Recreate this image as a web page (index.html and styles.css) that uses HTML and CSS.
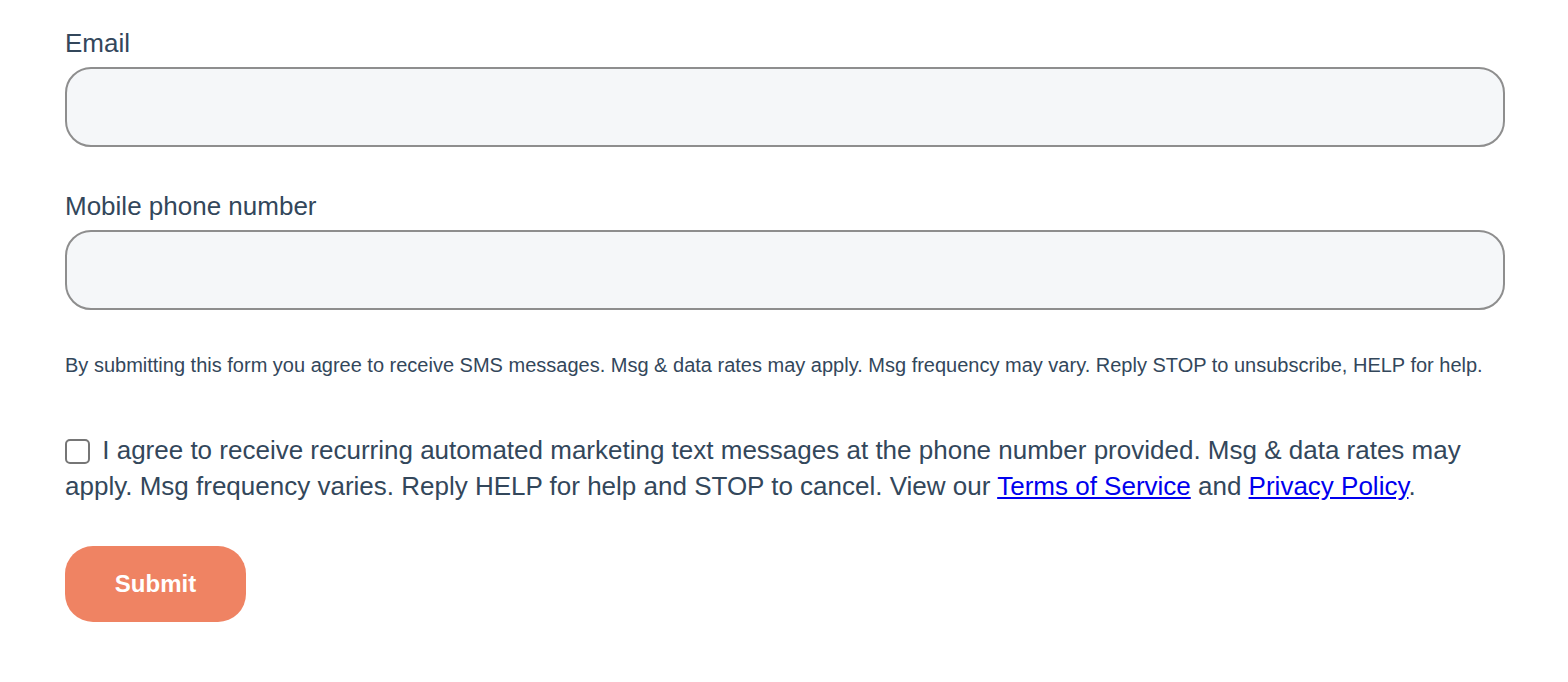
FILE: index.html
```html
<!DOCTYPE html>
<html lang="en">
<head>
<meta charset="utf-8">
<title>Form</title>
<link rel="stylesheet" href="styles.css">
</head>
<body>
<form class="form">
  <div class="field">
    <label class="label" for="email">Email</label>
    <input class="input" id="email" type="email">
  </div>
  <div class="field">
    <label class="label" for="phone">Mobile phone number</label>
    <input class="input" id="phone" type="tel">
  </div>
  <p class="legal">By submitting this form you agree to receive SMS messages. Msg &amp; data rates may apply. Msg frequency may vary. Reply STOP to unsubscribe, HELP for help.</p>
  <label class="consent">
    <span class="box"></span>
    I agree to receive recurring automated marketing text messages at the phone number provided. Msg &amp; data rates may apply. Msg frequency varies. Reply HELP for help and STOP to cancel. View our <a href="#">Terms of Service</a> and <a href="#">Privacy Policy</a>.
  </label>
  <button class="submit" type="button">Submit</button>
</form>
</body>
</html>
```

FILE: styles.css
```css
* { box-sizing: border-box; }
html, body { margin: 0; background: #fff; }
body {
  font-family: "Liberation Sans", Arial, sans-serif;
  color: #33475b;
}
.form {
  padding: 28px 63px 0 65px;
  display: flex;
  flex-direction: column;
}
.field {
  display: flex;
  flex-direction: column;
  margin-bottom: 44px;
}
.field + .field { margin-bottom: 0; }
.label {
  font-size: 26px;
  line-height: 30px;
  margin-bottom: 9px;
}
.input {
  height: 80px;
  width: 100%;
  border: 2px solid #8e8e8e;
  border-radius: 26px;
  background: #f5f7f9;
  font: inherit;
}
.legal {
  font-size: 20px;
  line-height: 24px;
  margin: 43px 0 0;
}
.consent {
  display: block;
  font-size: 26px;
  line-height: 36px;
  margin-top: 55px;
}
.box {
  display: inline-block;
  width: 25px;
  height: 25px;
  border: 2px solid #767676;
  border-radius: 5px;
  vertical-align: -5px;
  margin-right: 5px;
  background: #fff;
}
.consent a { color: #0000ee; text-decoration: underline; }
.submit {
  align-self: flex-start;
  margin-top: 42px;
  width: 181px;
  height: 76px;
  border: none;
  border-radius: 28px;
  background: #ef8363;
  color: #fff;
  font-family: "Liberation Sans", Arial, sans-serif;
  font-weight: bold;
  font-size: 24px;
}
```
